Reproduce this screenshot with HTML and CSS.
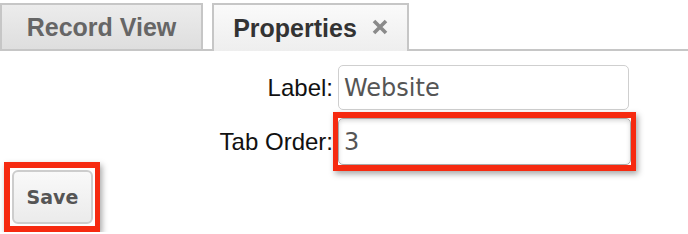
FILE: index.html
```html
<!DOCTYPE html>
<html lang="en">
<head>
    <meta charset="UTF-8">
    <title>Properties</title>
    <link rel="stylesheet" href="styles.css">
</head>
<body>
    <div class="tabs">
        <div class="tab">Record View</div>
        <div class="tab active">Properties
            <svg class="close" width="16" height="16" viewBox="0 0 16 16">
                <path d="M2 2 L14 14 M14 2 L2 14" stroke="#8a8a8a" stroke-width="3.6"/>
            </svg>
        </div>
    </div>
    <div class="props">
        <label for="label">Label:</label>
        <input type="text" id="label" class="field" value="Website">
        <label for="tab-order">Tab Order:</label>
        <span class="highlight">
            <input type="text" id="tab-order" class="field focused" value="3">
        </span>
    </div>
    <div class="save-wrap highlight">
        <button class="save">Save</button>
    </div>
</body>
</html>
```

FILE: styles.css
```css
body {
    margin: 0;
    background-color: #fff;
    font-family: "Liberation Sans", Arial, sans-serif;
}
.tabs {
    display: flex;
    gap: 9px;
    padding-top: 3px;
    border-bottom: 2px solid #c6c6c6;
}
.tab {
    width: 199px;
    height: 44px;
    border: 2px solid #c6c6c6;
    border-bottom: none;
    background: linear-gradient(#ececec, #dedede);
    color: #666;
    font-size: 25px;
    font-weight: bold;
    display: flex;
    align-items: center;
    justify-content: center;
}
.tab.active {
    width: 193px;
    height: 46px;
    margin-bottom: -2px;
    background: linear-gradient(#fafafa, #eeeeee);
    color: #333;
}
.tab .close {
    margin: 0 0 2px 15px;
}
.props {
    display: grid;
    grid-template-columns: 333px 300px;
    row-gap: 2px;
    align-items: center;
    margin-top: 14px;
}
.props label {
    text-align: right;
    font-size: 24px;
    color: #111;
}
.field {
    box-sizing: border-box;
    font-family: "DejaVu Sans", sans-serif;
    font-size: 24px;
    color: #555;
    border: 1px solid #cfcfcf;
    border-radius: 5px;
    padding: 0 5px;
    outline: none;
}
#label {
    margin-left: 5px;
    width: 291px;
    height: 45px;
}
.highlight {
    border: 5px solid #f62a10;
    box-shadow: 2px 3px 6px rgba(0, 0, 0, 0.35);
}
.props .highlight {
    display: block;
    width: 293px;
    border-top-width: 6px;
    border-bottom-width: 6px;
}
.field.focused {
    display: block;
    width: 293px;
    height: 47px;
    border-color: #a9a9a9;
    box-shadow: inset 0 2px 4px rgba(0, 0, 0, 0.15);
}
.save-wrap {
    display: inline-block;
    margin: -9px 0 0 4px;
    padding: 2px;
    border-width: 6px 5px 6px 6px;
}
.save {
    display: block;
    width: 81px;
    height: 54px;
    border: 2px solid #cdcdcd;
    border-radius: 6px;
    background: linear-gradient(#f9f9f9, #ebebeb);
    font-family: "DejaVu Sans", sans-serif;
    font-size: 19px;
    font-weight: bold;
    color: #555;
}
```
